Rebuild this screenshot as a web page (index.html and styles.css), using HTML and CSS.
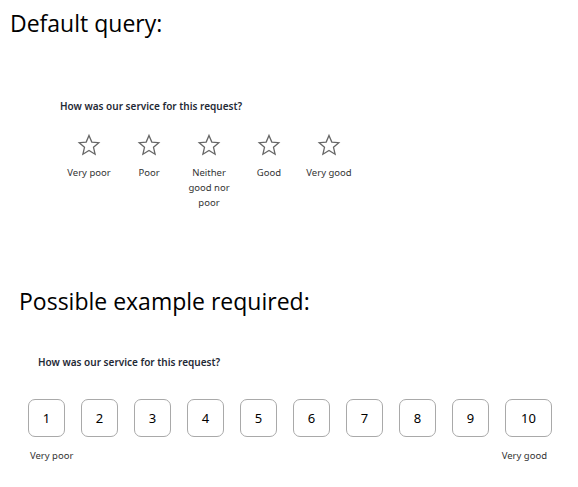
FILE: index.html
```html
<!DOCTYPE html>
<html lang="en">
<head>
  <meta charset="UTF-8">
  <title>Rating mockup</title>
  <link rel="stylesheet" href="styles.css">
</head>
<body>
  <h1 class="caption">Default query:</h1>

  <section class="survey stars-survey">
    <h2>How was our service for this request?</h2>
    <div class="stars">
      <div class="star-item">
        <svg viewBox="0 0 24 24" class="star"><path d="M12 2.5l2.8 6.6 7 .6-5.3 4.6 1.6 6.9L12 17.5l-6.1 3.7 1.6-6.9L2.2 9.7l7-.6z"/></svg>
        <span>Very poor</span>
      </div>
      <div class="star-item">
        <svg viewBox="0 0 24 24" class="star"><path d="M12 2.5l2.8 6.6 7 .6-5.3 4.6 1.6 6.9L12 17.5l-6.1 3.7 1.6-6.9L2.2 9.7l7-.6z"/></svg>
        <span>Poor</span>
      </div>
      <div class="star-item">
        <svg viewBox="0 0 24 24" class="star"><path d="M12 2.5l2.8 6.6 7 .6-5.3 4.6 1.6 6.9L12 17.5l-6.1 3.7 1.6-6.9L2.2 9.7l7-.6z"/></svg>
        <span>Neither good nor poor</span>
      </div>
      <div class="star-item">
        <svg viewBox="0 0 24 24" class="star"><path d="M12 2.5l2.8 6.6 7 .6-5.3 4.6 1.6 6.9L12 17.5l-6.1 3.7 1.6-6.9L2.2 9.7l7-.6z"/></svg>
        <span>Good</span>
      </div>
      <div class="star-item">
        <svg viewBox="0 0 24 24" class="star"><path d="M12 2.5l2.8 6.6 7 .6-5.3 4.6 1.6 6.9L12 17.5l-6.1 3.7 1.6-6.9L2.2 9.7l7-.6z"/></svg>
        <span>Very good</span>
      </div>
    </div>
  </section>

  <h1 class="caption second">Possible example required:</h1>

  <section class="survey scale-survey">
    <h2>How was our service for this request?</h2>
    <div class="scale">
      <button>1</button>
      <button>2</button>
      <button>3</button>
      <button>4</button>
      <button>5</button>
      <button>6</button>
      <button>7</button>
      <button>8</button>
      <button>9</button>
      <button class="wide">10</button>
    </div>
    <div class="scale-labels">
      <span>Very poor</span>
      <span>Very good</span>
    </div>
  </section>
</body>
</html>
```

FILE: styles.css
```css
body {
  margin: 0;
  padding: 0;
  background: #fff;
  color: #000;
  font-family: "Open Sans", sans-serif;
}
.caption {
  font-weight: normal;
  font-size: 23px;
  margin: 0;
  padding: 8px 0 0 10px;
  line-height: 30px;
}
.caption.second {
  padding: 0 0 0 19px;
  margin-top: 76px;
  font-size: 23px;
}
.survey h2 {
  font-family: "Noto Sans", sans-serif;
  font-size: 10px;
  font-weight: 600;
  color: #1f2a36;
  margin: 0;
  line-height: 14px;
}
.stars-survey {
  padding: 61px 0 0 60px;
}
.stars {
  display: flex;
  margin-top: 20px;
  margin-left: -1px;
}
.star-item {
  width: 60px;
  display: flex;
  flex-direction: column;
  align-items: center;
  text-align: center;
}
.star {
  width: 24px;
  height: 24px;
  fill: none;
  stroke: #666;
  stroke-width: 1.3;
  stroke-linejoin: miter;
}
.star-item span,
.scale-labels span {
  font-family: "Noto Sans", sans-serif;
  font-size: 9.5px;
  color: #333;
  line-height: 15px;
}
.star-item span {
  margin-top: 8px;
  width: 48px;
}
.scale-survey {
  padding: 39px 0 0 38px;
}
.scale {
  display: flex;
  gap: 16px;
  margin: 30px 0 0 -10px;
}
.scale button {
  width: 37px;
  height: 38px;
  background: #fff;
  border: 1px solid #a9a9a9;
  border-radius: 7px;
  font-family: "Noto Sans", sans-serif;
  font-size: 13px;
  color: #000;
  padding: 0;
}
.scale button.wide {
  width: 47px;
}
.scale-labels {
  display: flex;
  justify-content: space-between;
  width: 517px;
  margin: 11px 0 0 -8px;
}
```
